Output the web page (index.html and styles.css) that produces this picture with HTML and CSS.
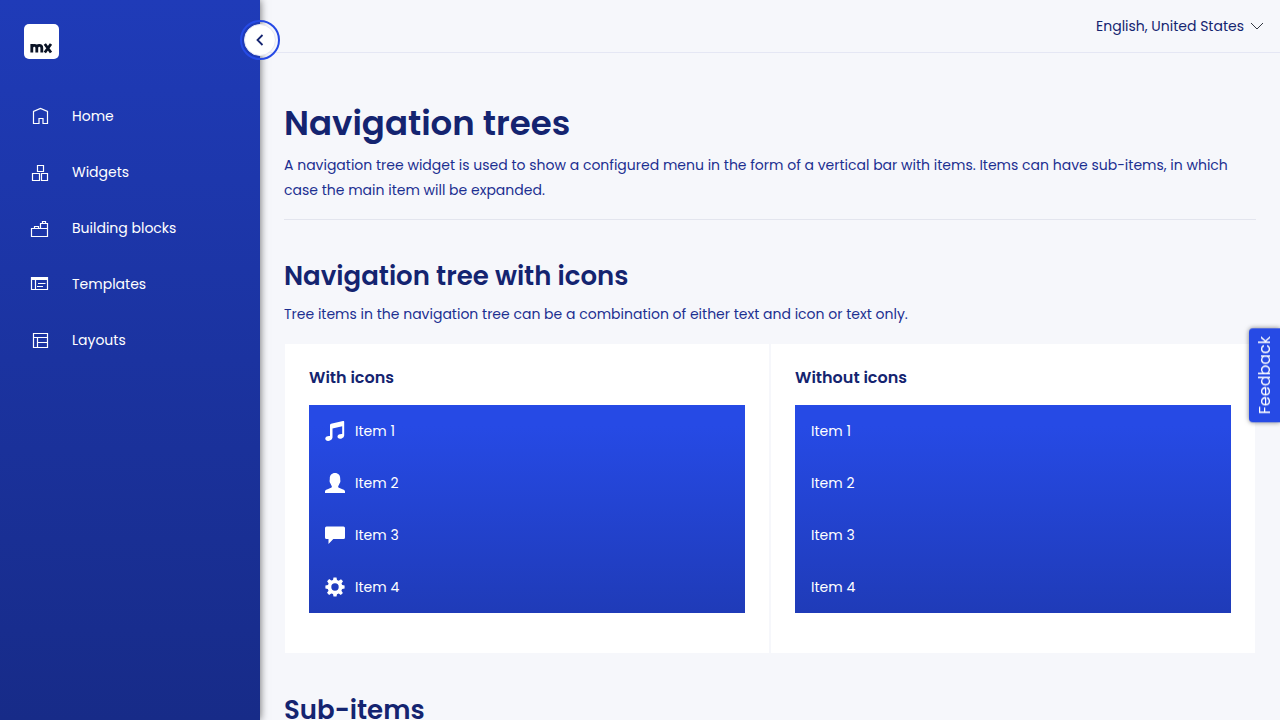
FILE: index.html
```html
<!DOCTYPE html>
<html lang="en">
<head>
<meta charset="utf-8">
<meta name="viewport" content="width=device-width, initial-scale=1">
<title>Navigation trees</title>
<link rel="stylesheet" href="styles.css">
</head>
<body>
<div class="app">
  <aside class="sidebar">
    <a class="logo" href="#" aria-label="Home page"><svg viewBox="0 0 35 35" aria-hidden="true"><g fill="none" stroke="#0a1325" stroke-width="2.800"><path d="M7.800 28.500v-8.500M7.800 28.500v-4.500q0-2.700 2.500-2.700t2.500 2.700v4.500M12.800 28.500v-4.500q0-2.700 2.500-2.700t2.500 2.700v4.500"/><path d="M20.800 20l6.200 8.500M27 20l-6.200 8.500"/></g></svg></a>
    <button class="toggle" type="button" aria-label="Collapse menu"><span class="toggle-face"><svg viewBox="0 0 12 12" aria-hidden="true"><path d="M8.500 1L3.500 6l5 5" fill="none" stroke="currentColor" stroke-width="1.800"/></svg></span></button>
    <nav class="menu" aria-label="Main">
      <a href="#"><svg class="menu-icon" viewBox="0 0 20 20" aria-hidden="true"><path d="M3.500 17.500v-12L10.500 2.500l7 3v12h-4.500v-5h-4v5z"/></svg>Home</a>
      <a href="#"><svg class="menu-icon" viewBox="0 0 20 20" aria-hidden="true"><path d="M7.500 3.500h6v6h-6zM2.500 11.500h7v7h-7zM11.500 11.500h6v7h-6z"/></svg>Widgets</a>
      <a href="#"><svg class="menu-icon" viewBox="0 0 20 20" aria-hidden="true"><path d="M1.500 10.500h16v8h-16zM10.500 10.500v-5h7v5M12.500 5.500v-2h3v2M4.500 10.500v-2h4v2"/></svg>Building blocks</a>
      <a href="#"><svg class="menu-icon" viewBox="0 0 20 20" aria-hidden="true"><path d="M1.500 3.500h16v12h-16zM5.500 6v9.500M8 9.500h7.500M7 12.500h6"/><path d="M1.500 4.500h16" stroke-width="3"/></svg>Templates</a>
      <a href="#"><svg class="menu-icon" viewBox="0 0 20 20" aria-hidden="true"><path d="M3.500 3.500h14v14h-14zM3.500 7.500h14M7.500 7.500v10M7.500 12.500h10"/></svg>Layouts</a>
    </nav>
  </aside>
  <div class="page">
    <header class="topbar">
      <button class="language" type="button">English, United States<svg viewBox="0 0 14 8" aria-hidden="true"><path d="M1 1l6 6 6-6" fill="none" stroke="#333842"/></svg></button>
    </header>
    <main class="content">
      <h1>Navigation trees</h1>
      <p class="intro">A navigation tree widget is used to show a configured menu in the form of a vertical bar with items. Items can have sub-items, in which case the main item will be expanded.</p>
      <section>
        <h2>Navigation tree with icons</h2>
        <p>Tree items in the navigation tree can be a combination of either text and icon or text only.</p>
        <div class="cards">
          <article class="card">
            <h3>With icons</h3>
            <ul class="tree">
              <li><a href="#"><svg viewBox="0 0 20 20" aria-hidden="true"><path d="M5 4.200Q5 3 6 2.700L18 0q1.200-.2 1.200 1V14.500q0 2.200-2.500 3-2.600.7-3.900-.8-1-1.700 1-3.100 1.700-1 3.400-.6V5.200L7.500 7.500v9q0 2.200-2.500 3.100-2.700.8-4.200-.6-1.400-1.900.8-3.400 1.600-1 3.400-.6z"/></svg>Item 1</a></li>
              <li><a href="#"><svg viewBox="0 0 20 20" aria-hidden="true"><path d="M10 0c3.300 0 5.200 2.300 5.200 5.500 0 1.200.1 1.500.2 2.300.1 1.700-.6 2.100-1 3-.4 1.200-.8 1.800-1.200 2.300-.4 1.500 1 2 2.500 2.500 2.500.9 4.300 1.600 4.300 2.800V20H0v-1.600c0-1.200 1.800-1.900 4.300-2.800 1.500-.5 2.900-1 2.500-2.500-.4-.5-.8-1.100-1.200-2.300-.4-.9-1.100-1.300-1-3 .1-.8.200-1.100.2-2.300C4.800 2.300 6.700 0 10 0z"/></svg>Item 2</a></li>
              <li><a href="#"><svg viewBox="0 0 20 20" aria-hidden="true"><path d="M1.500 1.500h17Q20 1.500 20 3v9.500q0 1.500-1.500 1.500H8.300L3.500 19v-5h-2Q0 14 0 12.500V3q0-1.500 1.500-1.500z"/></svg>Item 3</a></li>
              <li><a href="#"><svg viewBox="0 0 20 20" aria-hidden="true"><path fill-rule="evenodd" d="M8.500.5h3L12 3l1.700.7L16 2.200 18 4.200l-1.500 2.200.7 1.700 2.400.5v3l-2.500.4-.7 1.700 1.500 2.200-2.100 2.100-2.100-1.500-1.700.7-.5 2.400h-3L8 17.100l-1.700-.7-2.200 1.500L2 15.800l1.500-2.100-.7-1.700-2.400-.5v-3L3 8l.6-1.600L2.100 4.200l2.100-2.100 2.100 1.500L8 2.900zM10 6.300a3.700 3.700 0 100 7.400 3.700 3.700 0 000-7.400z"/></svg>Item 4</a></li>
            </ul>
          </article>
          <article class="card">
            <h3>Without icons</h3>
            <ul class="tree">
              <li><a href="#">Item 1</a></li>
              <li><a href="#">Item 2</a></li>
              <li><a href="#">Item 3</a></li>
              <li><a href="#">Item 4</a></li>
            </ul>
          </article>
        </div>
      </section>
      <section>
        <h2>Sub-items</h2>
      </section>
    </main>
  </div>
  <button class="feedback" type="button">Feedback</button>
</div>
</body>
</html>
```
FILE: styles.css
```css
* { box-sizing: border-box; }
body {
  margin: 0;
  font: 14px/25px Poppins, Inter, "Open Sans", sans-serif;
  color: #1c2f91;
  background: #f6f7fb;
}
a { color: inherit; text-decoration: none; }
button { font: inherit; color: inherit; border: 0; background: none; cursor: pointer; }
h1, h2, h3, p, ul { margin: 0; padding: 0; }
h1, h2, h3 { color: #142470; font-weight: 600; }
.app { display: flex; height: 100vh; overflow: hidden; }

.sidebar {
  position: relative;
  z-index: 1;
  flex: 0 0 260px;
  padding-top: 24px;
  color: #fff;
  background: linear-gradient(#1f3bb8, #172b88);
  box-shadow: 0 0 8px rgba(0, 0, 0, .6);
}
.logo {
  display: block;
  width: 35px;
  height: 35px;
  margin-left: 24px;
  border-radius: 5px;
  background: #fff;
}
.logo svg { display: block; }
.toggle {
  position: absolute;
  top: 20px;
  right: -20px;
  width: 40px;
  height: 40px;
  padding: 2px;
  border: 2px solid #264ae5;
  border-radius: 50%;
  color: #142470;
}
.toggle-face {
  display: grid;
  place-items: center;
  height: 100%;
  border: 1px solid #e5e7f4;
  border-radius: 50%;
  background: #fff;
}
.toggle svg { width: 12px; height: 12px; }
.menu { margin-top: 29px; }
.menu a {
  display: flex;
  align-items: center;
  gap: 22px;
  height: 56px;
  padding: 0 30px;
}
.menu-icon {
  width: 20px;
  height: 20px;
  fill: none;
  stroke: #fff;
  stroke-width: 1.2;
}

.page {
  flex: 1;
  min-width: 0;
  overflow-y: auto;
  scrollbar-width: none;
}
.topbar {
  display: flex;
  justify-content: flex-end;
  align-items: center;
  height: 53px;
  padding: 0 16px;
  border-bottom: 1px solid #e5e7f4;
}
.language {
  display: flex;
  align-items: center;
  gap: 6px;
  padding: 0;
  color: #142470;
}
.language svg { width: 14px; height: 8px; }
.content { padding: 48px 24px; }
h1 { margin-bottom: 8px; font-size: 34px; line-height: 44px; }
.intro { padding-bottom: 16px; border-bottom: 1px solid #e3e5ee; }
section { margin-top: 38px; }
h2 { margin-bottom: 8px; font-size: 26px; line-height: 36px; }
.cards {
  display: grid;
  grid-template-columns: 1fr 1fr;
  gap: 2px;
  margin: 17px 1px 0;
}
.cards + h2, section + section { margin-top: 39px; }
.card { padding: 20px 24px 40px; background: #fff; }
h3 { margin-bottom: 13px; font-size: 16px; line-height: 28px; }
.tree {
  list-style: none;
  color: #fff;
  background: linear-gradient(#264ae5 10%, #1f3bb8);
}
.tree a {
  display: flex;
  align-items: center;
  gap: 10px;
  height: 52px;
  padding: 0 16px;
}
.tree svg { width: 20px; height: 20px; fill: #fff; }

.feedback {
  position: fixed;
  top: 328px;
  right: 0;
  z-index: 2;
  padding: 8px 3px;
  border-radius: 0 4px 4px 0;
  font-size: 16px;
  color: #fff;
  background: #264ae5;
  box-shadow: 0 0 5px rgba(0, 0, 0, .5);
  writing-mode: vertical-rl;
  transform: rotate(180deg);
}
```
